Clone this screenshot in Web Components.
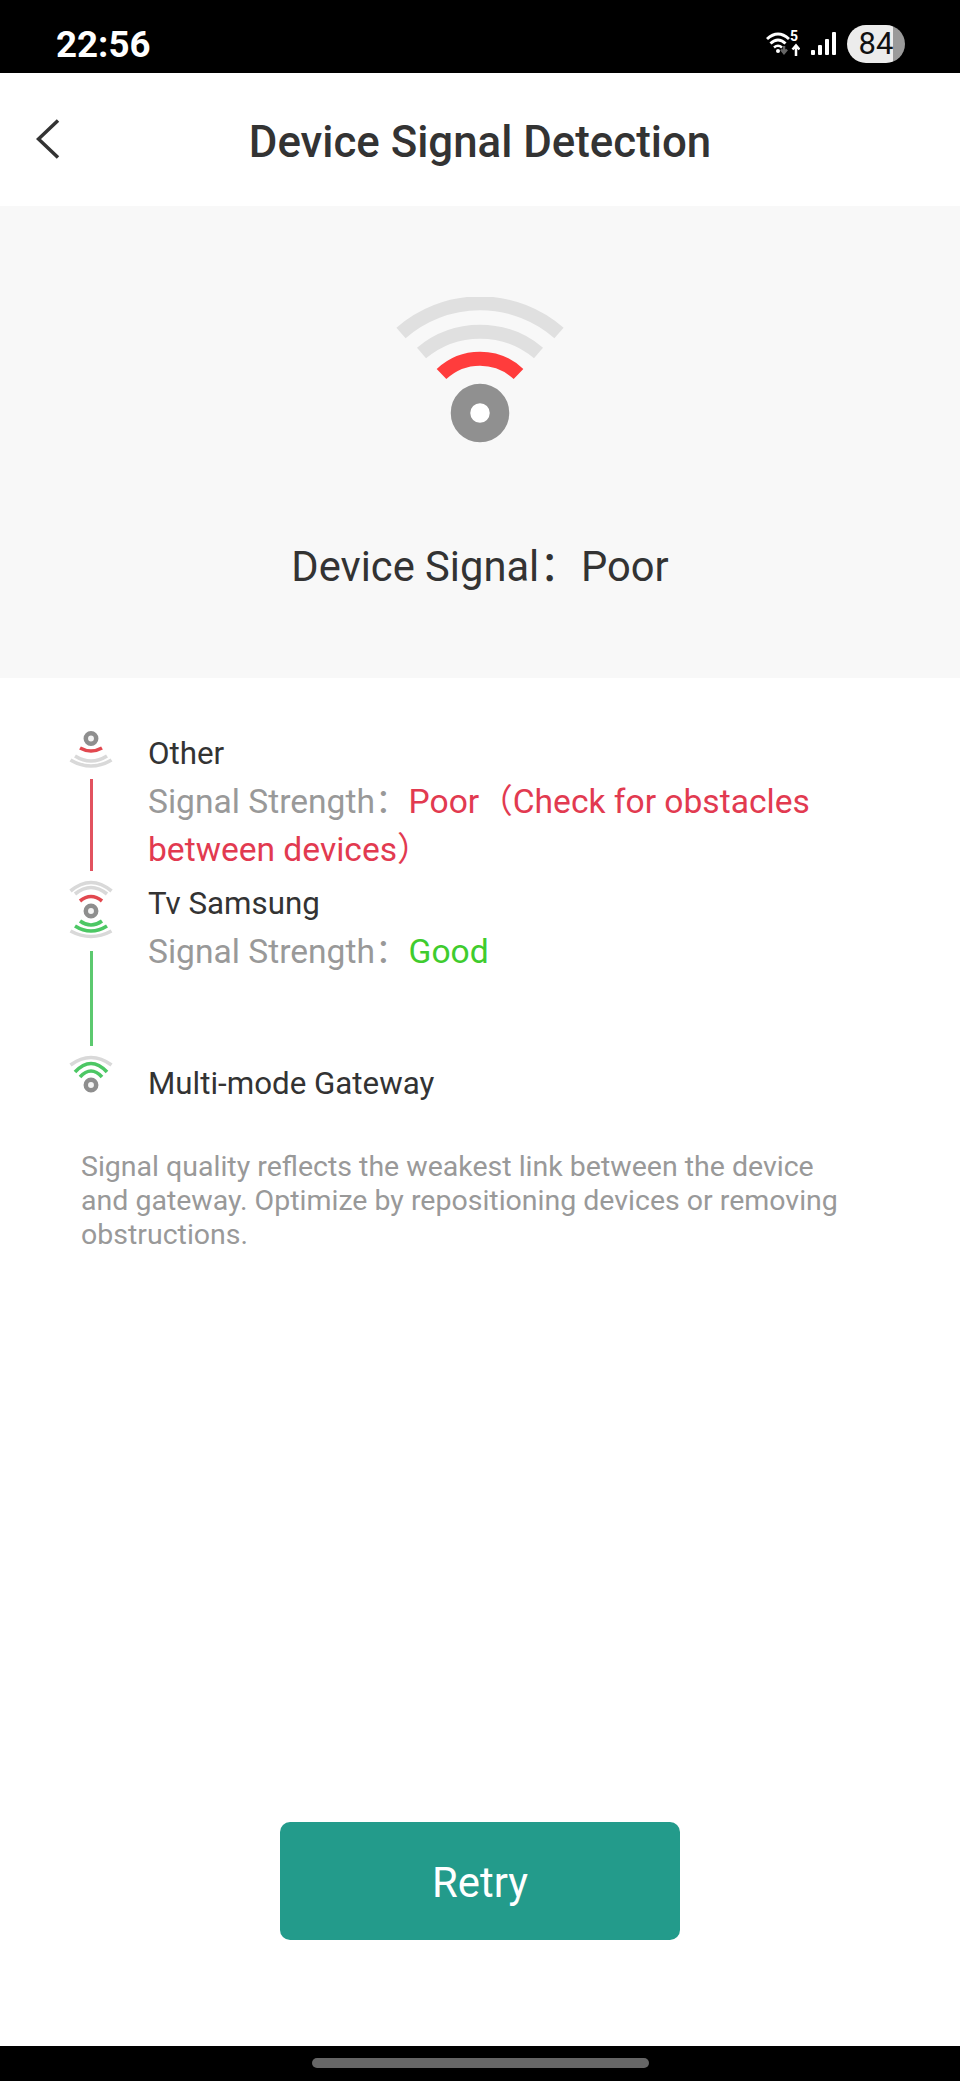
<!DOCTYPE html>
<html>
<head>
<meta charset="utf-8">
<title>Device Signal Detection</title>
<style>
    html, body { margin: 0; padding: 0; background: #fff; }
    body { font-family: Roboto, "Noto Sans CJK SC", sans-serif; }
    app-screen { height: 2081px; }
</style>
</head>
<body>
<app-screen>
    <status-bar slot="top" time="22:56" battery="84"></status-bar>
    <nav-bar slot="top">Device Signal Detection</nav-bar>
    <signal-hero slot="top">Device Signal：Poor</signal-hero>
    <signal-path slot="top">
        <signal-hop glyph="end-poor" line="#e2525f" style="--hop-height: 150px; --line-top: 6px; --text-top: 1px">
            <span slot="name">Other</span>
            <signal-state tone="bad">Poor（Check for obstacles<br>between devices）</signal-state>
        </signal-hop>
        <signal-hop glyph="relay" line="#5cc96f" style="--hop-height: 175px; --line-top: 10px; --text-top: 1px">
            <span slot="name">Tv Samsung</span>
            <signal-state tone="good">Good</signal-state>
        </signal-hop>
        <signal-hop glyph="end-good" last style="--hop-height: 54px; --text-top: 6px">
            <span slot="name">Multi-mode Gateway</span>
        </signal-hop>
    </signal-path>
    <hint-text slot="top">Signal quality reflects the weakest link between the device and gateway. Optimize by repositioning devices or removing obstructions.</hint-text>
    <retry-button slot="bottom">Retry</retry-button>
    <gesture-bar slot="bottom"></gesture-bar>
</app-screen>

<script>
class AppScreen extends HTMLElement {
    constructor() {
        super();
        this.attachShadow({ mode: 'open' });
        this.shadowRoot.innerHTML = `
            <style>
                :host {
                    display: flex;
                    flex-direction: column;
                    justify-content: space-between;
                    width: 960px;
                    background: #fff;
                    overflow: hidden;
                }
                .block { display: flex; flex-direction: column; }
            </style>
            <div class="block"><slot name="top"></slot></div>
            <div class="block"><slot name="bottom"></slot></div>
        `;
    }
}

class StatusBar extends HTMLElement {
    constructor() {
        super();
        this.attachShadow({ mode: 'open' });
        this.shadowRoot.innerHTML = `
            <style>
                :host {
                    display: flex;
                    align-items: center;
                    justify-content: space-between;
                    box-sizing: border-box;
                    height: 73px;
                    padding: 15px 55px 0 56px;
                    background: #000;
                    color: #fff;
                }
                .time { font-size: 36.700px; font-weight: 700; }
                .icons { display: flex; align-items: center; gap: 11px; }
                .wifi { position: relative; display: block; width: 34px; height: 26px; }
                .wifi svg { display: block; }
                .wifi b {
                    position: absolute;
                    left: 24px;
                    top: -2px;
                    font-size: 14px;
                    line-height: 14px;
                    font-weight: 700;
                }
                .battery {
                    width: 58px;
                    height: 38px;
                    border-radius: 19px;
                    background: linear-gradient(to right, #ececec 80%, #9a9a9a 80%);
                    color: #111;
                    font-size: 31px;
                    line-height: 38px;
                    text-align: center;
                }
            </style>
            <div class="time">${this.getAttribute('time')}</div>
            <div class="icons">
                <span class="wifi">
                    <svg width="34" height="26" viewBox="0 0 34 26" fill="none">
                        <path d="M1 8 Q12 -2 23 8" stroke="#fff" stroke-width="3"/>
                        <path d="M4.500 12.500 Q12 5.500 19.500 12.500" stroke="#fff" stroke-width="3"/>
                        <path d="M8 16.500 Q12 13 16 16.500" stroke="#fff" stroke-width="2.500"/>
                        <circle cx="12" cy="20" r="2" fill="#fff"/>
                        <path d="M18 15v6m-3-2.500l3 3.500 3-3.500" stroke="#666" stroke-width="2.500"/>
                        <path d="M30 25v-10m-3.500 3.500l3.500-4 3.500 4" stroke="#fff" stroke-width="2.500"/>
                    </svg>
                    <b>5</b>
                </span>
                <svg width="25" height="26" viewBox="0 0 25 26" fill="#fff">
                    <rect x="0" y="19" width="4" height="5" rx="1"/>
                    <rect x="7" y="14" width="4" height="10" rx="1"/>
                    <rect x="14" y="8" width="4" height="16" rx="1"/>
                    <rect x="21" y="1" width="4" height="23" rx="1"/>
                </svg>
                <div class="battery">${this.getAttribute('battery')}</div>
            </div>
        `;
    }
}

class NavBar extends HTMLElement {
    constructor() {
        super();
        this.attachShadow({ mode: 'open' });
        this.shadowRoot.innerHTML = `
            <style>
                :host {
                    display: flex;
                    align-items: center;
                    justify-content: center;
                    position: relative;
                    height: 133px;
                    background: #fff;
                    color: #333;
                    font-size: 43.800px;
                    font-weight: 500;
                }
                svg { position: absolute; left: 36px; top: 46px; }
                .title { margin-top: 4px; }
            </style>
            <svg width="24" height="40" viewBox="0 0 24 40" fill="none">
                <path d="M22 1.500 L2.500 20 L22 38.500" stroke="#333" stroke-width="3.500"/>
            </svg>
            <div class="title"><slot></slot></div>
        `;
    }
}

class SignalHero extends HTMLElement {
    constructor() {
        super();
        this.attachShadow({ mode: 'open' });
        this.shadowRoot.innerHTML = `
            <style>
                :host {
                    display: flex;
                    flex-direction: column;
                    align-items: center;
                    box-sizing: border-box;
                    height: 472px;
                    padding-top: 91px;
                    background: #f8f8f8;
                    color: #333;
                    font-size: 41.700px;
                }
                svg { display: block; }
                .label { margin-top: 100px; line-height: 48px; }
            </style>
            <svg width="170" height="146" viewBox="0 0 170 146" fill="none">
                <path d="M6 36 A120 120 0 0 1 164 36" stroke="#e0e0e0" stroke-width="14"/>
                <path d="M26.500 56 A91 91 0 0 1 143.500 56" stroke="#e0e0e0" stroke-width="14"/>
                <path d="M46.500 77 A56 56 0 0 1 123.500 77" stroke="#ff3c3c" stroke-width="14"/>
                <circle cx="85" cy="116" r="19.500" stroke="#909090" stroke-width="19.500" fill="#fff"/>
            </svg>
            <div class="label"><slot></slot></div>
        `;
    }
}

class SignalGlyph extends HTMLElement {
    constructor() {
        super();
        this.attachShadow({ mode: 'open' });
        const kinds = {
            'end-poor': {
                height: 44,
                dot: 9.5,
                arcs: [
                    ['M11 19 Q22 25 33 19', '#e2484f'],
                    ['M6 27 Q22 37 38 27', '#d9d9d9'],
                    ['M1.500 31 Q22 43 42.500 31', '#d9d9d9']
                ]
            },
            'relay': {
                height: 62,
                dot: 32,
                arcs: [
                    ['M1.500 12 Q22 -5 42.500 12', '#d9d9d9'],
                    ['M6 15 Q22 2 38 15', '#d9d9d9'],
                    ['M11 22 Q22 13 33 22', '#e2484f'],
                    ['M11 42 Q22 50 33 42', '#4cc764'],
                    ['M6 47 Q22 57 38 47', '#4cc764'],
                    ['M1.500 52 Q22 63 42.500 52', '#d9d9d9']
                ]
            },
            'end-good': {
                height: 44,
                dot: 31,
                arcs: [
                    ['M1.500 11 Q22 -4 42.500 11', '#d9d9d9'],
                    ['M6 18 Q22 1 38 18', '#4cc764'],
                    ['M11 23 Q22 11 33 23', '#4cc764']
                ]
            }
        };
        const kind = kinds[this.getAttribute('kind')];
        const arcs = kind.arcs.map(a => `<path d="${a[0]}" stroke="${a[1]}" stroke-width="3.600"/>`).join('');
        this.shadowRoot.innerHTML = `
            <style>
                :host { display: block; width: 44px; height: ${kind.height}px; flex: none; }
                svg { display: block; }
            </style>
            <svg width="44" height="${kind.height}" viewBox="0 0 44 ${kind.height}" fill="none">
                ${arcs}
                <circle cx="22" cy="${kind.dot}" r="5.200" stroke="#8e8e8e" stroke-width="4.500" fill="#f4f4f4"/>
            </svg>
        `;
    }
}

class SignalPath extends HTMLElement {
    constructor() {
        super();
        this.attachShadow({ mode: 'open' });
        this.shadowRoot.innerHTML = `
            <style>
                :host { display: flex; flex-direction: column; padding: 51px 0 0 69px; }
            </style>
            <slot></slot>
        `;
    }
}

class SignalHop extends HTMLElement {
    constructor() {
        super();
        this.attachShadow({ mode: 'open' });
        const last = this.hasAttribute('last');
        const line = last ? '' : `<div class="line" style="background:${this.getAttribute('line')}"></div>`;
        this.shadowRoot.innerHTML = `
            <style>
                :host {
                    display: grid;
                    grid-template-columns: 44px 1fr;
                    column-gap: 35px;
                    height: var(--hop-height);
                    font-size: 31.300px;
                    line-height: 48px;
                    color: #333;
                }
                .rail { display: flex; flex-direction: column; align-items: center; }
                .line { flex: 1; width: 3px; margin: var(--line-top) 0 8px; }
                .text { padding-top: var(--text-top); width: 690px; }
            </style>
            <div class="rail">
                <signal-glyph kind="${this.getAttribute('glyph')}"></signal-glyph>
                ${line}
            </div>
            <div class="text">
                <div><slot name="name"></slot></div>
                <slot></slot>
            </div>
        `;
    }
}

class SignalState extends HTMLElement {
    constructor() {
        super();
        this.attachShadow({ mode: 'open' });
        const colour = this.getAttribute('tone') === 'good' ? '#3fcc2e' : '#e23a50';
        this.shadowRoot.innerHTML = `
            <style>
                :host { display: block; color: #999; font-size: 33.600px; }
                .value { color: ${colour}; }
            </style>
            <span>Signal Strength：</span><span class="value"><slot></slot></span>
        `;
    }
}

class HintText extends HTMLElement {
    constructor() {
        super();
        this.attachShadow({ mode: 'open' });
        this.shadowRoot.innerHTML = `
            <style>
                :host {
                    display: block;
                    box-sizing: border-box;
                    width: 851px;
                    padding: 42px 0 0 81px;
                    font-size: 28.500px;
                    line-height: 34px;
                    color: #999;
                }
            </style>
            <slot></slot>
        `;
    }
}

class RetryButton extends HTMLElement {
    constructor() {
        super();
        this.attachShadow({ mode: 'open' });
        this.shadowRoot.innerHTML = `
            <style>
                :host {
                    display: flex;
                    align-items: center;
                    justify-content: center;
                    align-self: center;
                    width: 400px;
                    height: 118px;
                    margin-bottom: 106px;
                    border-radius: 10px;
                    background: #239b8b;
                    color: #fff;
                    font-size: 41.800px;
                }
                .label { margin-top: 3px; }
            </style>
            <div class="label"><slot></slot></div>
        `;
    }
}

class GestureBar extends HTMLElement {
    constructor() {
        super();
        this.attachShadow({ mode: 'open' });
        this.shadowRoot.innerHTML = `
            <style>
                :host {
                    display: flex;
                    justify-content: center;
                    height: 35px;
                    padding-top: 12px;
                    box-sizing: border-box;
                    background: #000;
                }
                .pill { width: 337px; height: 10px; border-radius: 5px; background: #666; }
            </style>
            <div class="pill"></div>
        `;
    }
}

customElements.define('app-screen', AppScreen);
customElements.define('status-bar', StatusBar);
customElements.define('nav-bar', NavBar);
customElements.define('signal-hero', SignalHero);
customElements.define('signal-glyph', SignalGlyph);
customElements.define('signal-path', SignalPath);
customElements.define('signal-hop', SignalHop);
customElements.define('signal-state', SignalState);
customElements.define('hint-text', HintText);
customElements.define('retry-button', RetryButton);
customElements.define('gesture-bar', GestureBar);
</script>
</body>
</html>
